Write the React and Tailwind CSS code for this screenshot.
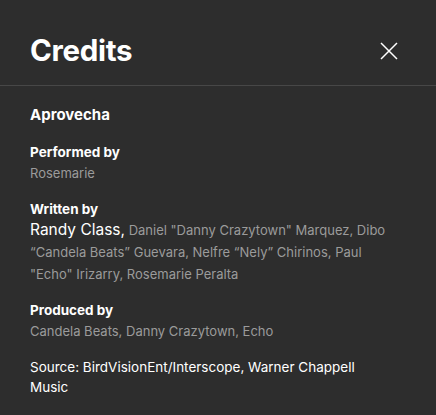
import React from 'react';

const Section = ({ title, first, children }) => (
  <div className={first ? 'mt-[17px]' : 'mt-[15px]'}>
    <h3 className="text-[13.5px] font-bold leading-[20px] text-white">{title}</h3>
    {children}
  </div>
);

export default function App() {
  return (
    <div className="w-[436px] h-[415px] bg-[#2d2d2d] text-white font-['Inter',sans-serif] overflow-hidden">
      <div className="flex items-center justify-between pl-[30px] pr-[38px] pt-[16px] h-[86px] border-b border-[#474747]">
        <h1 className="text-[29.5px] font-bold tracking-[-0.3px]">Credits</h1>
        <button className="text-white" aria-label="Close">
          <svg width="18" height="18" viewBox="0 0 18 18" fill="none" stroke="currentColor" strokeWidth="1.5">
            <path d="M1 1L17 17M17 1L1 17" />
          </svg>
        </button>
      </div>

      <div className="px-[30px] pt-[19px]">
        <h2 className="text-[15px] font-bold leading-[20px]">Aprovecha</h2>

        <Section title="Performed by" first>
          <p className="text-[13px] leading-[22px] text-[#9b9b9b]">Rosemarie</p>
        </Section>

        <Section title="Written by">
          <p className="text-[13px] leading-[22px] text-[#9b9b9b]">
            <span className="text-[15.5px] text-white">Randy Class,</span> Daniel "Danny Crazytown" Marquez, Dibo
            “Candela Beats” Guevara, Nelfre “Nely” Chirinos, Paul "Echo" Irizarry, Rosemarie Peralta
          </p>
        </Section>

        <Section title="Produced by">
          <p className="text-[13px] leading-[22px] text-[#9b9b9b]">Candela Beats, Danny Crazytown, Echo</p>
        </Section>

        <p className="mt-[15px] text-[13.5px] leading-[20px] text-white pr-[10px]">
          Source: BirdVisionEnt/Interscope, Warner Chappell Music
        </p>
      </div>
    </div>
  );
}
